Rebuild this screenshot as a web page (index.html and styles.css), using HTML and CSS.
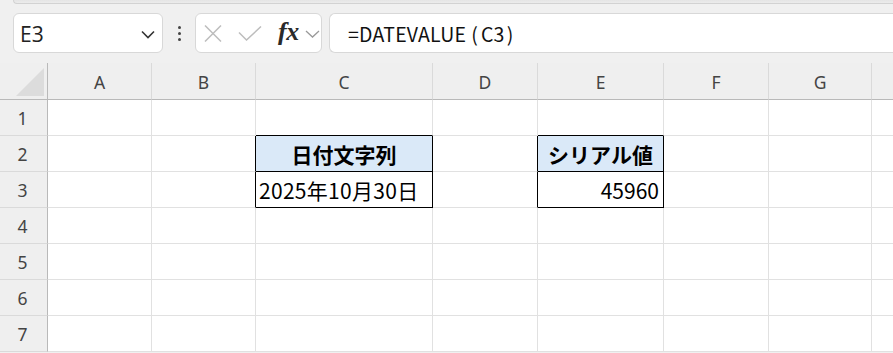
FILE: index.html
```html
<!DOCTYPE html>
<html lang="ja">
<head>
<meta charset="utf-8">
<link rel="stylesheet" href="styles.css">
</head>
<body>
<div class="ribbon-edge"></div>
<div class="toolbar">
  <div class="namebox">
    <span class="name">E3</span>
    <svg class="chev" width="14" height="9" viewBox="0 0 14 9"><path d="M1 1.5 L7 7.5 L13 1.5" fill="none" stroke="#333" stroke-width="1.6"/></svg>
  </div>
  <div class="dots"><i></i><i></i><i></i></div>
  <div class="fxbox">
    <svg class="ico-x" width="18" height="17" viewBox="0 0 18 17"><path d="M1 0.5 L17 16.5 M17 0.5 L1 16.5" fill="none" stroke="#bdbdbd" stroke-width="1.5"/></svg>
    <svg class="ico-ok" width="24" height="15" viewBox="0 0 24 15"><path d="M1 6.5 L8.5 14 L23 0.5" fill="none" stroke="#bdbdbd" stroke-width="1.5"/></svg>
    <span class="fx">fx</span>
    <svg class="chev-s" width="15" height="8" viewBox="0 0 15 8"><path d="M1 1 L7.5 7 L14 1" fill="none" stroke="#9a9a9a" stroke-width="1.3"/></svg>
  </div>
  <div class="formula">=DATEVALUE<span class="po">(</span>C3<span class="pc">)</span></div>
</div>
<div class="sheet">
  <div class="corner"><div class="tri"></div></div>
  <div class="ch">A</div><div class="ch">B</div><div class="ch">C</div><div class="ch">D</div><div class="ch">E</div><div class="ch">F</div><div class="ch">G</div><div class="ch last"></div>

  <div class="rh">1</div>
  <div class="c"></div><div class="c"></div><div class="c bb"></div><div class="c"></div><div class="c bb"></div><div class="c"></div><div class="c"></div><div class="c last"></div>

  <div class="rh">2</div>
  <div class="c"></div><div class="c br"></div><div class="c hd br bb">日付文字列</div><div class="c br"></div><div class="c hd br bb">シリアル値</div><div class="c"></div><div class="c"></div><div class="c last"></div>

  <div class="rh">3</div>
  <div class="c"></div><div class="c br"></div><div class="c val br bb">2025年10月30日</div><div class="c br"></div><div class="c num br bb">45960</div><div class="c"></div><div class="c"></div><div class="c last"></div>

  <div class="rh">4</div>
  <div class="c"></div><div class="c"></div><div class="c"></div><div class="c"></div><div class="c"></div><div class="c"></div><div class="c"></div><div class="c last"></div>

  <div class="rh">5</div>
  <div class="c"></div><div class="c"></div><div class="c"></div><div class="c"></div><div class="c"></div><div class="c"></div><div class="c"></div><div class="c last"></div>

  <div class="rh">6</div>
  <div class="c"></div><div class="c"></div><div class="c"></div><div class="c"></div><div class="c"></div><div class="c"></div><div class="c"></div><div class="c last"></div>

  <div class="rh">7</div>
  <div class="c"></div><div class="c"></div><div class="c"></div><div class="c"></div><div class="c"></div><div class="c"></div><div class="c"></div><div class="c last"></div>
</div>
</body>
</html>
```

FILE: styles.css
```css
* { box-sizing: border-box; }
html, body { margin: 0; padding: 0; }
body {
  width: 893px;
  height: 353px;
  overflow: hidden;
  background: #f0f0f0;
  font-family: "Noto Sans", "Noto Sans CJK JP", sans-serif;
}
.ribbon-edge {
  height: 4px;
  margin-left: 13px;
  background: linear-gradient(#e4e4e4, #ececec);
  border-bottom: 1px solid #d2d2d2;
  border-left: 1px solid #d2d2d2;
  border-bottom-left-radius: 4px;
}
.toolbar {
  display: flex;
  align-items: center;
  height: 59px;
  padding: 9px 0 10px 13px;
}
.namebox {
  width: 150px;
  height: 40px;
  background: #fff;
  border: 1px solid #d8d8d8;
  border-radius: 6px;
  display: flex;
  align-items: center;
  justify-content: space-between;
  padding: 0 7px 0 6px;
}
.name {
  font-family: "Open Sans", "Noto Sans", sans-serif;
  font-size: 21px;
  color: #222;
  line-height: 1;
  margin-top: 2px;
}
.chev { margin-top: 2px; }
.dots {
  width: 32px;
  display: flex;
  flex-direction: column;
  align-items: center;
  gap: 3px;
}
.dots i {
  display: block;
  width: 3px;
  height: 3px;
  border-radius: 50%;
  background: #444;
}
.fxbox {
  width: 127px;
  height: 40px;
  background: #fff;
  border: 1px solid #d8d8d8;
  border-radius: 6px;
  display: flex;
  align-items: center;
  padding-left: 8px;
}
.ico-ok { margin-left: 16px; }
.fx {
  margin-left: 16px;
  font-family: "Liberation Serif", serif;
  font-style: italic;
  font-weight: bold;
  font-size: 26px;
  color: #2a2a2a;
  line-height: 1;
  margin-top: -3px;
  letter-spacing: -0.5px;
}
.chev-s { margin-left: 6px; margin-top: 1px; }
.formula {
  margin-left: 7px;
  flex: 1;
  height: 40px;
  background: #fff;
  border: 1px solid #d8d8d8;
  border-right: none;
  border-radius: 6px 0 0 6px;
  display: flex;
  align-items: center;
  padding-left: 18px;
  font-family: "Noto Sans CJK JP", sans-serif;
  font-size: 19.5px;
  letter-spacing: 0.2px;
  color: #111;
}
.formula .po { margin: 0 3px 0 5px; }
.formula .pc { margin-left: 2px; }
.sheet {
  display: grid;
  grid-template-columns: 48px 104px 104px 177px 105px 126px 105px 103px 1fr;
  grid-template-rows: 37px repeat(7, 36px);
  background: #fff;
}
.corner {
  background: #efefef;
  border-right: 1px solid #b9b9b9;
  border-bottom: 1px solid #b9b9b9;
  position: relative;
}
.tri {
  position: absolute;
  left: 16px;
  top: 5px;
  width: 28px;
  height: 28px;
  background: #dcdcdc;
  clip-path: polygon(100% 0, 100% 100%, 0 100%);
}
.ch {
  background: #efefef;
  border-right: 1px solid #dadada;
  border-bottom: 1px solid #b9b9b9;
  display: flex;
  align-items: center;
  justify-content: center;
  font-family: "Noto Sans", sans-serif;
  font-size: 17.5px;
  color: #444;
  padding-top: 2px;
}
.ch.last, .c.last { border-right: none; }
.rh {
  background: #efefef;
  border-right: 1px solid #b9b9b9;
  border-bottom: 1px solid #dadada;
  display: flex;
  align-items: center;
  justify-content: center;
  font-family: "Noto Sans", sans-serif;
  font-size: 17.5px;
  color: #444;
  padding-right: 2px;
}
.c {
  border-right: 1px solid #e1e1e1;
  border-bottom: 1px solid #e1e1e1;
  display: flex;
  align-items: center;
  font-family: "Noto Sans CJK JP", sans-serif;
  font-size: 21px;
  color: #000;
  white-space: nowrap;
}
.c.br { border-right-color: #000; }
.c.bb { border-bottom-color: #000; }
.c.hd {
  background: #dae9f8;
  font-weight: bold;
  justify-content: center;
}
.c.val { padding-left: 3px; letter-spacing: 0.3px; }
.c.num { justify-content: flex-end; padding-right: 4px; }
```
